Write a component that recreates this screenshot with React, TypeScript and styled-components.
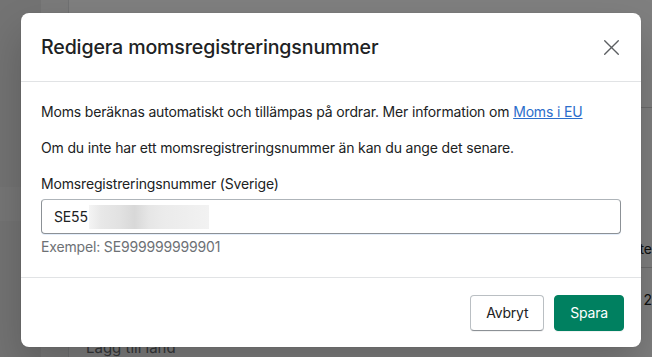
import React from "react";
import styled, { createGlobalStyle } from "styled-components";

const Global = createGlobalStyle`
  html, body {
    margin: 0;
    padding: 0;
    width: 652px;
    height: 357px;
    overflow: hidden;
    font-family: Inter, "Noto Sans", "Liberation Sans", sans-serif;
    color: #202223;
  }
  * { box-sizing: border-box; }
`;

const Page = styled.div`
  position: relative;
  display: flex;
  width: 652px;
  height: 357px;
  background: #f4f4f4;
`;
const Sidebar = styled.div`
  width: 41px;
  background: #e6e6e6;
  padding-top: 187px;
`;
const NavActive = styled.div`
  height: 34px;
  background: #ededed;
`;
const Main = styled.div`
  flex: 1;
  display: flex;
  padding: 0 0 0 27px;
`;
const Card = styled.div`
  flex: 1;
  background: #ffffff;
  border-left: 1px solid #e1e3e5;
  display: flex;
  flex-direction: column;
  font-size: 14px;
`;
const CardRow = styled.div<{ h: number; line?: boolean }>`
  height: ${({ h }) => h}px;
  border-bottom: ${({ line }) => (line ? "1px solid #d6d6d6" : "none")};
  display: flex;
  align-items: flex-end;
  justify-content: flex-end;
  padding: 0 0 10px 16px;
  color: #202223;
  white-space: nowrap;
`;
const AddLand = styled.div`
  margin-top: auto;
  padding: 0 0 0 17px;
  font-size: 15px;
  color: #6d7175;
  line-height: 16px;
  height: 16px;
  margin-bottom: 1px;
`;

const Overlay = styled.div`
  position: absolute;
  inset: 0;
  background: rgba(0, 0, 0, 0.5);
  display: flex;
  align-items: flex-start;
  padding: 13px 11px 0 21px;
`;
const Modal = styled.div`
  width: 620px;
  height: 334px;
  background: #ffffff;
  border-radius: 8px;
  display: flex;
  flex-direction: column;
  box-shadow: 0 0 1px rgba(0, 0, 0, 0.2), 0 20px 40px rgba(0, 0, 0, 0.2);
  overflow: hidden;
`;
const Header = styled.div`
  height: 69px;
  display: flex;
  align-items: center;
  justify-content: space-between;
  padding: 0 20px 0 20px;
  border-bottom: 1px solid #e1e3e5;
`;
const Title = styled.h2`
  margin: 0;
  font-size: 19.6px;
  font-weight: 500;
  letter-spacing: -0.15px;
  color: #202223;
`;
const Close = styled.button`
  border: none;
  background: none;
  padding: 0;
  width: 24px;
  height: 24px;
  display: flex;
  align-items: center;
  justify-content: center;
  color: #5c5f62;
  margin-right: -2px;
`;
const Body = styled.div`
  flex: 1;
  padding: 20px 20px 0 20px;
  border-bottom: 1px solid #e1e3e5;
  font-size: 14px;
  line-height: 20px;
  letter-spacing: -0.16px;
`;
const Para = styled.p`
  margin: 0 0 16px 0;
`;
const Link = styled.a`
  color: #2c6ecb;
  text-decoration: underline;
`;
const Label = styled.div`
  margin-bottom: 5px;
`;
const Field = styled.div`
  height: 35px;
  border: 1px solid #8c9196;
  border-top-color: #aeb4b9;
  border-radius: 4px;
  display: flex;
  align-items: center;
  padding: 0 12px;
  box-shadow: 0 1px 0 #e4eefb;
`;
const Blur = styled.span`
  display: inline-block;
  width: 120px;
  height: 24px;
  margin-left: 1px;
  background: linear-gradient(
    90deg,
    #f4f4f4 0%,
    #e8e8e8 10%,
    #e2e2e2 25%,
    #d8d8d8 38%,
    #e6e6e6 50%,
    #ebebeb 62%,
    #eeeeee 80%,
    #f2f2f2 100%
  );
`;
const Help = styled.div`
  margin-top: 3px;
  color: #6d7175;
`;
const Footer = styled.div`
  height: 69px;
  display: flex;
  align-items: center;
  justify-content: flex-end;
  gap: 10px;
  padding: 0 17px 0 20px;
`;
const Button = styled.button<{ primary?: boolean }>`
  height: 36px;
  padding: 0 15px;
  font-family: inherit;
  font-size: 14px;
  font-weight: 400;
  letter-spacing: -0.2px;
  border-radius: 4px;
  border: 1px solid ${({ primary }) => (primary ? "#008060" : "#babfc3")};
  border-bottom-color: ${({ primary }) => (primary ? "#008060" : "#8c9196")};
  background: ${({ primary }) => (primary ? "#008060" : "#ffffff")};
  color: ${({ primary }) => (primary ? "#ffffff" : "#202223")};
  box-shadow: 0 1px 0 rgba(0, 0, 0, 0.05);
`;

export default function App() {
  return (
    <>
      <Global />
      <Page>
        <Sidebar>
          <NavActive />
        </Sidebar>
        <Main>
          <Card>
            <CardRow h={108} line />
            <CardRow h={160} line>te</CardRow>
            <CardRow h={50}>s 2</CardRow>
            <AddLand>Lägg till land</AddLand>
          </Card>
        </Main>
        <Overlay>
          <Modal>
            <Header>
              <Title>Redigera momsregistreringsnummer</Title>
              <Close aria-label="Stäng">
                <svg width="17" height="17" viewBox="0 0 20 20">
                  <path
                    d="M2 2 18 18M18 2 2 18"
                    stroke="currentColor"
                    strokeWidth="1.6"
                    strokeLinecap="round"
                  />
                </svg>
              </Close>
            </Header>
            <Body>
              <Para>
                Moms beräknas automatiskt och tillämpas på ordrar. Mer information om{" "}
                <Link href="#">Moms i EU</Link>
              </Para>
              <Para>Om du inte har ett momsregistreringsnummer än kan du ange det senare.</Para>
              <Label>Momsregistreringsnummer (Sverige)</Label>
              <Field>
                SE55
                <Blur />
              </Field>
              <Help>Exempel: SE999999999901</Help>
            </Body>
            <Footer>
              <Button>Avbryt</Button>
              <Button primary>Spara</Button>
            </Footer>
          </Modal>
        </Overlay>
      </Page>
    </>
  );
}
